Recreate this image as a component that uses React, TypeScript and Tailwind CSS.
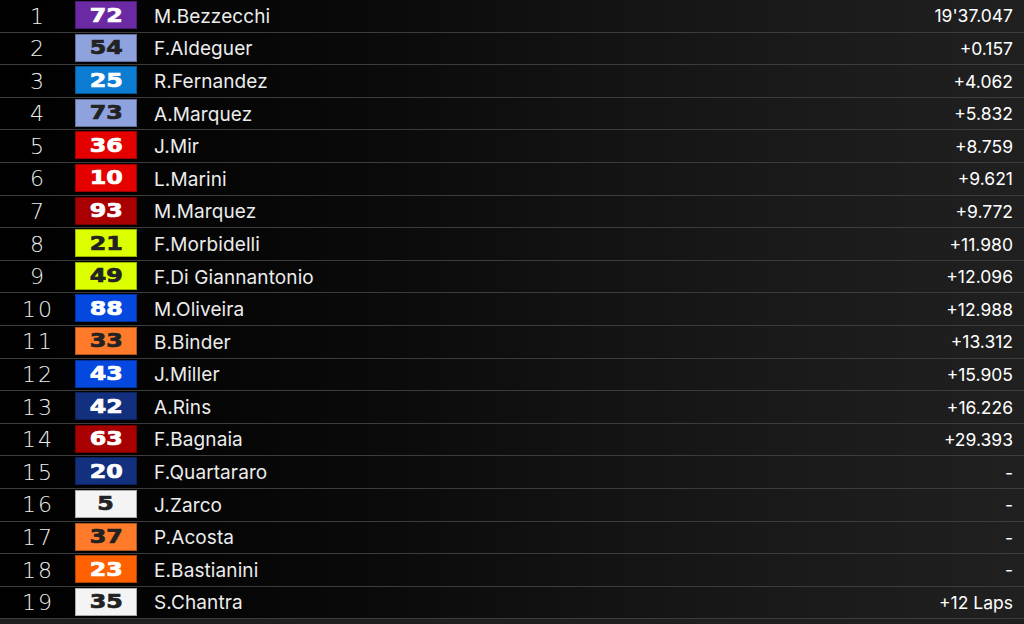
import React from "react";

type Row = { pos: number; num: string; bg: string; fg: string; name: string; time: string };

const rows: Row[] = [
  { pos: 1, num: "72", bg: "bg-[#6b2aa3]", fg: "text-white", name: "M.Bezzecchi", time: "19'37.047" },
  { pos: 2, num: "54", bg: "bg-[#8ea3de]", fg: "text-[#222]", name: "F.Aldeguer", time: "+0.157" },
  { pos: 3, num: "25", bg: "bg-[#0c7bd2]", fg: "text-white", name: "R.Fernandez", time: "+4.062" },
  { pos: 4, num: "73", bg: "bg-[#8ea3de]", fg: "text-[#222]", name: "A.Marquez", time: "+5.832" },
  { pos: 5, num: "36", bg: "bg-[#e50000]", fg: "text-white", name: "J.Mir", time: "+8.759" },
  { pos: 6, num: "10", bg: "bg-[#e50000]", fg: "text-white", name: "L.Marini", time: "+9.621" },
  { pos: 7, num: "93", bg: "bg-[#a80000]", fg: "text-white", name: "M.Marquez", time: "+9.772" },
  { pos: 8, num: "21", bg: "bg-[#dcff00]", fg: "text-[#222]", name: "F.Morbidelli", time: "+11.980" },
  { pos: 9, num: "49", bg: "bg-[#dcff00]", fg: "text-[#222]", name: "F.Di Giannantonio", time: "+12.096" },
  { pos: 10, num: "88", bg: "bg-[#0448e0]", fg: "text-white", name: "M.Oliveira", time: "+12.988" },
  { pos: 11, num: "33", bg: "bg-[#ff7a2a]", fg: "text-[#222]", name: "B.Binder", time: "+13.312" },
  { pos: 12, num: "43", bg: "bg-[#0448e0]", fg: "text-white", name: "J.Miller", time: "+15.905" },
  { pos: 13, num: "42", bg: "bg-[#13307f]", fg: "text-white", name: "A.Rins", time: "+16.226" },
  { pos: 14, num: "63", bg: "bg-[#a80000]", fg: "text-white", name: "F.Bagnaia", time: "+29.393" },
  { pos: 15, num: "20", bg: "bg-[#13307f]", fg: "text-white", name: "F.Quartararo", time: "-" },
  { pos: 16, num: "5", bg: "bg-[#f4f4f4]", fg: "text-[#222]", name: "J.Zarco", time: "-" },
  { pos: 17, num: "37", bg: "bg-[#ff7a2a]", fg: "text-[#222]", name: "P.Acosta", time: "-" },
  { pos: 18, num: "23", bg: "bg-[#ff6000]", fg: "text-white", name: "E.Bastianini", time: "-" },
  { pos: 19, num: "35", bg: "bg-[#f4f4f4]", fg: "text-[#222]", name: "S.Chantra", time: "+12 Laps" },
];

export default function App() {
  return (
    <div className="w-[1024px] h-[624px] overflow-hidden bg-[linear-gradient(to_right,#000_0px,#050505_200px,#0b0b0b_400px,#131313_600px,#1a1a1a_800px,#202020_1024px)]">
      {rows.map((r) => (
        <div
          key={r.pos}
          className="flex h-[32.6px] items-start border-b border-[#3c3c3c]"
        >
          <div className="w-[75px] h-[31px] flex items-center justify-center pl-[1px] pt-[1px] text-[22px] font-extralight text-[#eeeeee] tracking-[2px] [font-family:'DejaVu_Sans',sans-serif]">
            {r.pos}
          </div>
          <div
            className={`mt-[1px] w-[62px] h-[28px] flex items-center justify-center border border-black/30 ${r.bg} ${r.fg}`}
          >
            <span className="inline-block scale-x-[1.25] text-[19px] font-bold leading-none [-webkit-text-stroke:0.7px_currentColor] [font-family:'DejaVu_Sans',sans-serif]">
              {r.num}
            </span>
          </div>
          <div className="ml-[17px] h-[31px] flex items-center pt-[3px] text-[19px] text-[#ececec] tracking-[0.1px] [font-family:Inter,sans-serif]">
            {r.name}
          </div>
          <div className="flex-1" />
          <div className="mr-[11px] h-[31px] flex items-center pt-[2px] text-[17.5px] text-white [font-family:Inter,sans-serif]">
            {r.time}
          </div>
        </div>
      ))}
      <div className="h-[10px] bg-[#1f1f1f]" />
    </div>
  );
}
